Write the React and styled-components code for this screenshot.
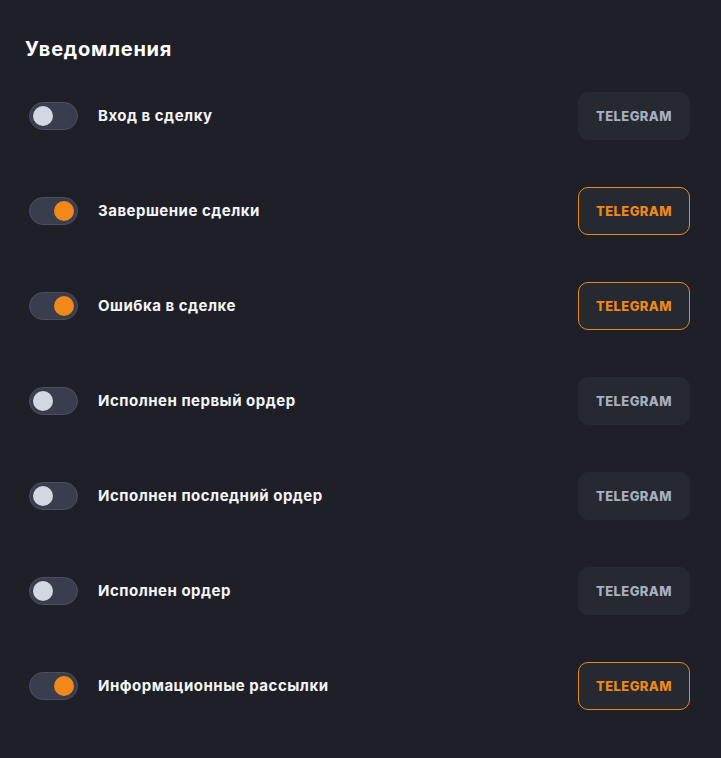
import React, { useState } from 'react';
import styled, { createGlobalStyle } from 'styled-components';

const GlobalStyle = createGlobalStyle`
  html, body {
    margin: 0;
    padding: 0;
    background: #1f2027;
  }
  body {
    font-family: "Inter", "Noto Sans", "Liberation Sans", sans-serif;
    color: #f2f3f7;
  }
`;

const Page = styled.div`
  min-height: 758px;
  box-sizing: border-box;
  padding: 37px 31px 0 25px;
`;

const Title = styled.h2`
  margin: 0 0 30px;
  font-size: 20px;
  line-height: 25px;
  font-weight: 700;
  letter-spacing: 0.75px;
  color: #ffffff;
`;

const List = styled.div`
  display: flex;
  flex-direction: column;
  gap: 47px;
`;

const Row = styled.div`
  display: flex;
  align-items: center;
  height: 48px;
  padding-left: 4px;
`;

const Track = styled.button`
  position: relative;
  width: 49px;
  height: 28px;
  padding: 0;
  border-radius: 14px;
  border: 1px solid #4a4e60;
  background: #3a3d4d;
  cursor: pointer;
  flex-shrink: 0;
`;

const Knob = styled.span`
  position: absolute;
  top: 3px;
  left: ${(p) => (p.$on ? '24px' : '3px')};
  width: 20px;
  height: 20px;
  border-radius: 50%;
  background: ${(p) => (p.$on ? '#f0881a' : '#d3d7e2')};
`;

const Label = styled.span`
  margin-left: 20px;
  margin-top: -2px;
  flex: 1;
  font-size: 15px;
  font-weight: 700;
  letter-spacing: 0.5px;
  color: #f4f5f8;
`;

const Channel = styled.button`
  width: 112px;
  height: 48px;
  box-sizing: border-box;
  border-radius: 10px;
  border: 1px solid ${(p) => (p.$on ? '#e58a1c' : '#262930')};
  background: #262930;
  color: ${(p) => (p.$on ? '#f0881a' : '#a8afc3')};
  font-family: inherit;
  font-size: 13px;
  font-weight: 800;
  letter-spacing: 0.4px;
  cursor: pointer;
`;

const initial = [
  { label: 'Вход в сделку', on: false },
  { label: 'Завершение сделки', on: true },
  { label: 'Ошибка в сделке', on: true },
  { label: 'Исполнен первый ордер', on: false },
  { label: 'Исполнен последний ордер', on: false },
  { label: 'Исполнен ордер', on: false },
  { label: 'Информационные рассылки', on: true },
];

export default function App() {
  const [items, setItems] = useState(initial);

  const toggle = (i) =>
    setItems(items.map((it, j) => (j === i ? { ...it, on: !it.on } : it)));

  return (
    <>
      <GlobalStyle />
      <Page>
        <Title>Уведомления</Title>
        <List>
          {items.map((it, i) => (
            <Row key={it.label}>
              <Track onClick={() => toggle(i)}>
                <Knob $on={it.on} />
              </Track>
              <Label>{it.label}</Label>
              <Channel $on={it.on}>TELEGRAM</Channel>
            </Row>
          ))}
        </List>
      </Page>
    </>
  );
}
